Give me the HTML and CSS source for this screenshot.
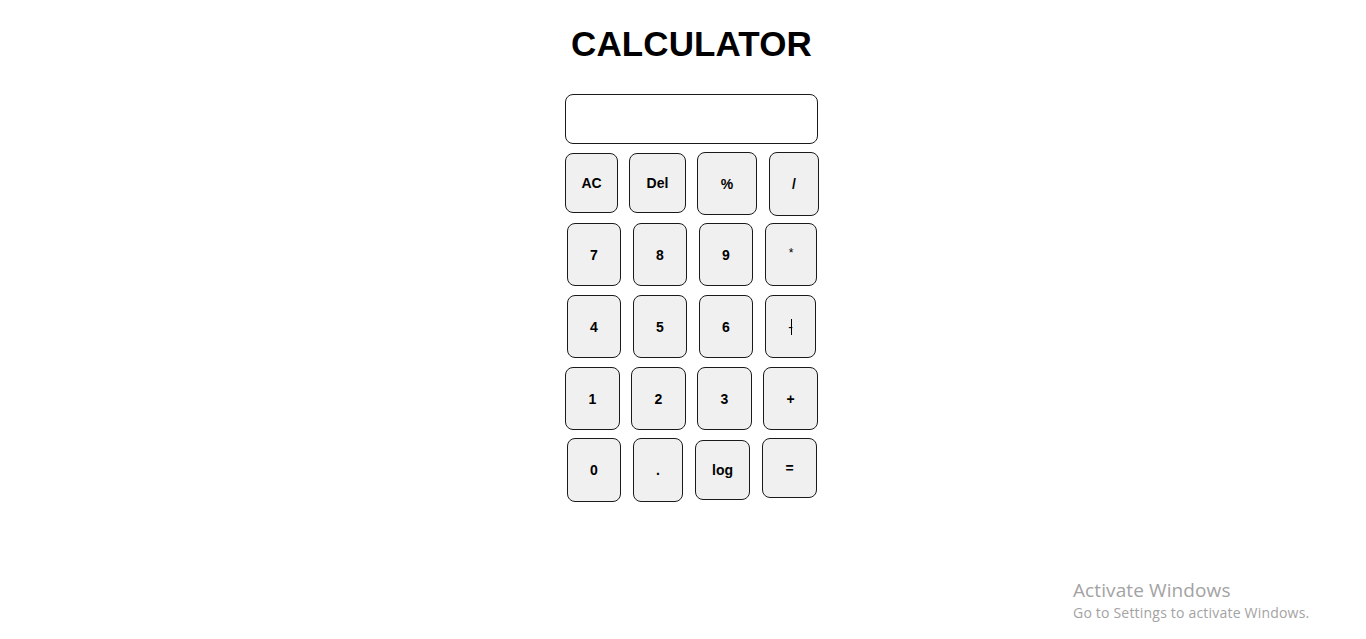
FILE: index.html
```html
<!DOCTYPE html>
<html lang="en">
<head>
<meta charset="utf-8">
<title>Calculator</title>
<link rel="stylesheet" href="styles.css">
</head>
<body>
<main class="page">
  <h1 class="title">CALCULATOR</h1>
  <div class="calc">
    <div class="display"></div>
    <div class="row row-1">
      <button class="key w53 h60 t1">AC</button>
      <button class="key w57 h60 t1">Del</button>
      <button class="key w60 h63">%</button>
      <button class="key w50 h64 n1">/</button>
    </div>
    <div class="row row-2">
      <button class="key w54 h63">7</button>
      <button class="key w54 h63">8</button>
      <button class="key w54 h63">9</button>
      <button class="key w52 h63 star">*</button>
    </div>
    <div class="row row-3">
      <button class="key w54 h63">4</button>
      <button class="key w54 h63">5</button>
      <button class="key w54 h63">6</button>
      <button class="key w51 h63 minus">-<span class="cursor"></span></button>
    </div>
    <div class="row row-4">
      <button class="key w55 h63">1</button>
      <button class="key w55 h63">2</button>
      <button class="key w55 h63">3</button>
      <button class="key w55 h63">+</button>
    </div>
    <div class="row row-5">
      <button class="key w54 h64">0</button>
      <button class="key w50 h64">.</button>
      <button class="key w55 h60 t2">log</button>
      <button class="key w55 h60">=</button>
    </div>
  </div>
</main>
<div class="activate">
  <div class="activate-title">Activate Windows</div>
  <div class="activate-sub">Go to Settings to activate Windows.</div>
</div>
</body>
</html>
```

FILE: styles.css
```css
html, body {
  margin: 0;
  padding: 0;
  background: #ffffff;
}

body {
  width: 1366px;
  height: 639px;
  overflow: hidden;
  font-family: "Liberation Sans", Arial, sans-serif;
  color: #000;
}

.page {
  display: flex;
  flex-direction: column;
  align-items: center;
  padding-left: 17px;
  padding-top: 24px;
}

.title {
  margin: 0;
  font-size: 35px;
  font-weight: bold;
  line-height: 40px;
  letter-spacing: 0.1px;
}

.calc {
  width: 253px;
  margin-top: 30px;
  display: flex;
  flex-direction: column;
}

.display {
  box-sizing: border-box;
  width: 253px;
  height: 50px;
  border: 1px solid #1a1a1a;
  border-radius: 8px;
  background: #fff;
}

.row {
  display: flex;
  align-items: flex-start;
}

.row-1 { margin-top: 8px; height: 64px; gap: 11px; padding-left: 0; }
.row-2 { margin-top: 7px; height: 63px; gap: 12px; padding-left: 2px; }
.row-3 { margin-top: 9px; height: 63px; gap: 12px; padding-left: 2px; }
.row-4 { margin-top: 9px; height: 63px; gap: 11px; padding-left: 0; }
.row-5 { margin-top: 8px; height: 64px; gap: 12px; padding-left: 2px; }

.key {
  box-sizing: border-box;
  flex: none;
  position: relative;
  margin: 0;
  padding: 0;
  border: 1px solid #1a1a1a;
  border-radius: 8px;
  background: #f0f0f0;
  font-family: "Liberation Sans", Arial, sans-serif;
  font-weight: bold;
  font-size: 14px;
  color: #000;
  display: flex;
  align-items: center;
  justify-content: center;
}

.w50 { width: 50px; }
.w51 { width: 51px; }
.w52 { width: 52px; }
.w53 { width: 53px; }
.w54 { width: 54px; }
.w55 { width: 55px; }
.w57 { width: 57px; }
.w60 { width: 60px; }

.h60 { height: 60px; }
.h63 { height: 63px; }
.h64 { height: 64px; }

.t1 { margin-top: 1px; }
.t2 { margin-top: 2px; }
.n1 { margin-left: 1px; }

.star {
  font-weight: normal;
  font-size: 12px;
  padding-bottom: 4px;
}

.minus {
  font-weight: normal;
}

.cursor {
  position: absolute;
  left: 25px;
  top: 23px;
  width: 1px;
  height: 16px;
  background: #000;
}

.activate {
  position: absolute;
  left: 1073px;
  top: 578px;
  font-family: "Open Sans", "Noto Sans", sans-serif;
  color: #a3a3a3;
}

.activate-title {
  font-size: 19px;
  line-height: 25px;
  letter-spacing: 0.1px;
}

.activate-sub {
  font-size: 14px;
  line-height: 20px;
  letter-spacing: 0.2px;
}
```
